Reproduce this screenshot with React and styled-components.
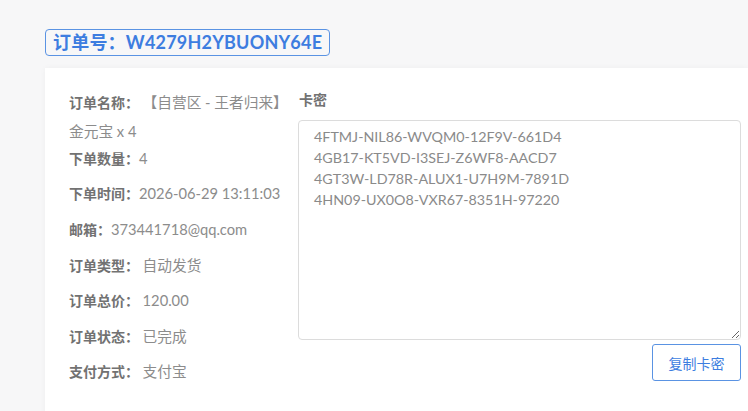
import React from 'react';
import styled, { createGlobalStyle } from 'styled-components';

const GlobalStyle = createGlobalStyle`
  html, body {
    margin: 0;
    padding: 0;
    background: #f7f7f8;
    font-family: Lato, "Noto Sans CJK SC", sans-serif;
  }
  * { box-sizing: border-box; }
`;

const Page = styled.div`
  padding: 29px 0 0 45px;
  min-height: 411px;
  overflow: hidden;
`;

const OrderTag = styled.h2`
  display: inline-block;
  margin: 0;
  height: 27px;
  line-height: 25px;
  padding: 0 7px;
  border: 1px solid #5a93e3;
  border-radius: 4px;
  color: #3d7de0;
  font-size: 18px;
  font-weight: 700;
  letter-spacing: 0.2px;
`;

const Card = styled.div`
  margin-top: 12px;
  background: #fff;
  box-shadow: 0 0 6px rgba(0, 0, 0, 0.04);
  display: flex;
  gap: 13px;
  padding: 20px 7px 30px 24px;
  min-height: 360px;
`;

const InfoColumn = styled.div`
  width: 214px;
  flex-shrink: 0;
  margin-right: 2px;
`;

const Row = styled.div`
  font-size: 14px;
  line-height: ${(p) => p.$lh || 22}px;
  margin-top: ${(p) => p.$mt || 0}px;
`;

const Label = styled.span`
  line-height: 1;
  font-weight: 700;
  color: #727272;
`;

const Value = styled.span`
  line-height: 1;
  font-size: 14.7px;
  color: #8c8c8c;
`;

const CodeColumn = styled.div`
  flex: 1;
  display: flex;
  flex-direction: column;
`;

const CodeTitle = styled.div`
  font-size: 14px;
  font-weight: 700;
  color: #727272;
  line-height: 22px;
  margin: 1px 0 9px 1px;
`;

const CodeBox = styled.textarea`
  width: 100%;
  height: 220px;
  border: 1px solid #dcdcdc;
  border-radius: 4px;
  padding: 5px 15px;
  font-family: Lato, "Noto Sans CJK SC", sans-serif;
  font-size: 14.3px;
  line-height: 21px;
  color: #8a8a8a;
  outline: none;
  resize: vertical;
`;

const Actions = styled.div`
  display: flex;
  justify-content: flex-end;
  margin-top: 4px;
`;

const CopyButton = styled.button`
  width: 89px;
  height: 37px;
  background: #fff;
  border: 1px solid #5a93e3;
  border-radius: 3px;
  color: #3d7de0;
  font-family: "Noto Sans CJK SC", sans-serif;
  font-size: 14px;
  cursor: pointer;
`;

const codes = [
  '4FTMJ-NIL86-WVQM0-12F9V-661D4',
  '4GB17-KT5VD-I3SEJ-Z6WF8-AACD7',
  '4GT3W-LD78R-ALUX1-U7H9M-7891D',
  '4HN09-UX0O8-VXR67-8351H-97220',
];

const details = [
  ['订单类型：', '自动发货'],
  ['订单总价：', '120.00'],
  ['订单状态：', '已完成'],
  ['支付方式：', '支付宝'],
];

export default function App() {
  return (
    <>
      <GlobalStyle />
      <Page>
        <OrderTag>订单号：W4279H2YBUONY64E</OrderTag>
        <Card>
          <InfoColumn>
            <Row $lh={29}>
              <Label>订单名称：</Label> <Value>【自营区 - 王者归来】金元宝 x 4</Value>
            </Row>
            <Row $mt={2}>
              <Label>下单数量：</Label><Value>4</Value>
            </Row>
            <Row $mt={13}>
              <Label>下单时间：</Label><Value>2026-06-29 13:11:03</Value>
            </Row>
            <Row $mt={14}>
              <Label>邮箱：</Label><Value>373441718@qq.com</Value>
            </Row>
            {details.map(([k, v]) => (
              <Row key={k} $mt={13.5}>
                <Label>{k}</Label> <Value>{v}</Value>
              </Row>
            ))}
          </InfoColumn>
          <CodeColumn>
            <CodeTitle>卡密</CodeTitle>
            <CodeBox readOnly defaultValue={codes.join('\n')} />
            <Actions>
              <CopyButton>复制卡密</CopyButton>
            </Actions>
          </CodeColumn>
        </Card>
      </Page>
    </>
  );
}
